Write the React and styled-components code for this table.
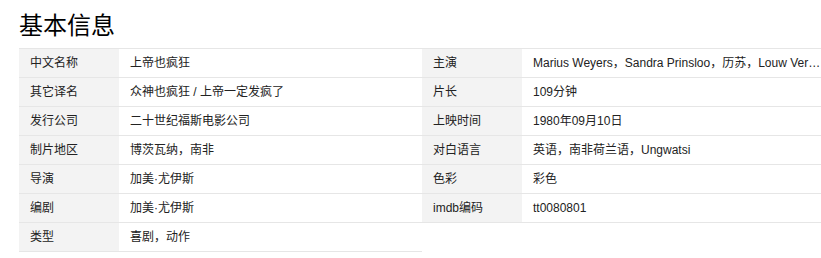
import React from "react";
import styled, { createGlobalStyle } from "styled-components";

const Global = createGlobalStyle`
  html, body { margin: 0; padding: 0; background: #fff; overflow: hidden; }
  body { font-family: "Liberation Sans", "Noto Sans CJK SC", sans-serif; color: #333; }
`;

const Page = styled.div`
  padding: 0 0 0 19px;
  width: 821px;
  box-sizing: border-box;
  overflow: hidden;
`;

const Title = styled.h2`
  margin: 6px 0 6px;
  height: 36px;
  line-height: 36px;
  font-size: 24px;
  font-weight: normal;
  color: #000;
  font-family: "Noto Sans CJK SC", sans-serif;
`;

const Columns = styled.div`
  display: flex;
  align-items: flex-start;
`;

const InfoList = styled.dl`
  margin: 0;
  border-top: 1px solid #e6e6e6;
  width: ${(p) => (p.$grow ? "auto" : "403px")};
  flex: ${(p) => (p.$grow ? "1 1 0" : "0 0 auto")};
  min-width: 0;
`;

const Row = styled.div`
  display: flex;
  height: 28px;
  border-bottom: 1px solid #e6e6e6;
  font-size: 12px;
  line-height: 28px;
`;

const Label = styled.dt`
  flex: 0 0 100px;
  box-sizing: border-box;
  padding-left: 11px;
  background: #f3f3f3;
  color: #222;
`;

const Value = styled.dd`
  flex: 1 1 0;
  min-width: 0;
  margin: 0;
  padding-left: 11px;
  color: #222;
  white-space: nowrap;
  overflow: hidden;
  text-overflow: ellipsis;
`;

const left = [
  ["中文名称", "上帝也疯狂"],
  ["其它译名", "众神也疯狂 / 上帝一定发疯了"],
  ["发行公司", "二十世纪福斯电影公司"],
  ["制片地区", "博茨瓦纳，南非"],
  ["导演", "加美·尤伊斯"],
  ["编剧", "加美·尤伊斯"],
  ["类型", "喜剧，动作"],
];

const right = [
  ["主演", "Marius Weyers，Sandra Prinsloo，历苏，Louw Verwey，Michael Thys"],
  ["片长", "109分钟"],
  ["上映时间", "1980年09月10日"],
  ["对白语言", "英语，南非荷兰语，Ungwatsi"],
  ["色彩", "彩色"],
  ["imdb编码", "tt0080801"],
];

function List({ items, grow }) {
  return (
    <InfoList $grow={grow}>
      {items.map(([k, v]) => (
        <Row key={k}>
          <Label>{k}</Label>
          <Value>{v}</Value>
        </Row>
      ))}
    </InfoList>
  );
}

export default function App() {
  return (
    <>
      <Global />
      <Page>
        <Title>基本信息</Title>
        <Columns>
          <List items={left} />
          <List items={right} grow />
        </Columns>
      </Page>
    </>
  );
}
